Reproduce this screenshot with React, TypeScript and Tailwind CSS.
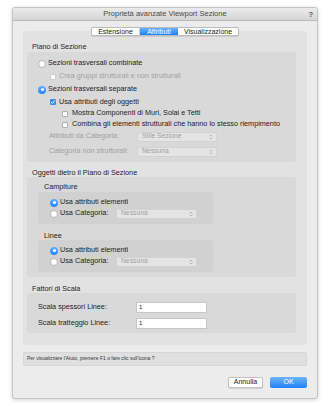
import React from "react";

const font = { fontFamily: '"Liberation Sans", Arial, sans-serif' };

function Radio({ on, disabled }: { on?: boolean; disabled?: boolean }) {
  if (on) {
    return (
      <span className="flex h-[8px] w-[8px] shrink-0 items-center justify-center rounded-full bg-gradient-to-b from-[#5fb0fb] to-[#1f84f7]">
        <span className="h-[3px] w-[3px] rounded-full bg-white" />
      </span>
    );
  }
  return (
    <span
      className={`h-[8px] w-[8px] shrink-0 rounded-full border bg-white ${
        disabled ? "border-[#d0d0d0]" : "border-[#b4b4b4]"
      }`}
    />
  );
}

function Check({ on, disabled }: { on?: boolean; disabled?: boolean }) {
  if (on) {
    return (
      <span className="flex h-[6px] w-[6px] shrink-0 items-center justify-center rounded-[1px] bg-[#2f8ff8]">
        <svg viewBox="0 0 8 8" className="h-[6px] w-[6px]">
          <path d="M1.6 4.2 L3.3 5.9 L6.5 2" fill="none" stroke="white" strokeWidth="1.3" />
        </svg>
      </span>
    );
  }
  return (
    <span
      className={`h-[6px] w-[6px] shrink-0 rounded-[1px] border bg-white ${
        disabled ? "border-[#cdcdcd]" : "border-[#adadad]"
      }`}
    />
  );
}

function Select({ value, width }: { value: string; width: string }) {
  return (
    <div
      className={`flex h-[10px] ${width} items-center justify-between rounded-[2px] border border-[#d2d2d2] bg-[#e4e4e4] pl-[4px] pr-[3px] text-[6.75px] text-[#a0a0a0]`}
    >
      <span>{value}</span>
      <svg viewBox="0 0 6 8" className="h-[6px] w-[4px]">
        <path d="M1 3 L3 1 L5 3 M1 5 L3 7 L5 5" fill="none" stroke="#9a9a9a" strokeWidth="0.9" />
      </svg>
    </div>
  );
}

function ElementChoice() {
  return (
    <div className="ml-[11px] w-[175px] rounded-[3px] bg-[#d1d1d1] px-[12px] py-[5px]">
      <div className="flex h-[11px] items-center gap-[2px]">
        <Radio on />
        <span>Usa attributi elementi</span>
      </div>
      <div className="flex h-[11px] items-center">
        <Radio />
        <span className="ml-[2px] w-[56px]">Usa Categoria:</span>
        <Select value="Nessuna" width="w-[81px]" />
      </div>
    </div>
  );
}

export default function App() {
  return (
    <div className="h-[406px] w-[329px] bg-white pl-[12px] pt-[7px] text-[7.25px] text-[#222]" style={font}>
      <div className="flex h-[392px] w-[306px] flex-col overflow-hidden rounded-[3px] border border-[#c4c4c4] bg-[#ececec] shadow-[0_1px_4px_rgba(0,0,0,0.18)]">
        {/* title bar */}
        <div className="relative flex h-[13px] shrink-0 items-center justify-center border-b border-[#b9b9b9] bg-gradient-to-b from-[#ebebeb] to-[#d5d5d5] text-[7.5px] text-[#4a4a4a]">
          Proprietà avanzate Viewport Sezione
          <span className="absolute right-[4px] top-[1px] text-[7.5px] font-bold text-[#555]">?</span>
        </div>

        <div className="flex flex-1 flex-col px-[10px]">
          {/* tabs */}
          <div className="relative z-10 mt-[6px] flex h-[9px] justify-center">
            <div className="flex h-[9px] overflow-hidden rounded-[2px] border border-[#bdbdbd] bg-white text-[7px] leading-[7px] text-[#222] shadow-[0_0.5px_1px_rgba(0,0,0,0.1)]">
              <span className="flex w-[48px] items-center justify-center border-r border-[#cfcfcf]">Estensione</span>
              <span className="flex w-[38px] items-center justify-center bg-gradient-to-b from-[#69b1fb] to-[#1b7ff8] text-white">
                Attributi
              </span>
              <span className="flex w-[60px] items-center justify-center">Visualizzazione</span>
            </div>
          </div>

          {/* tab content */}
          <div className="-mt-[5px] h-[314px] rounded-[3px] bg-[#e2e2e2] px-[4px] pt-[12px]">
            <div className="h-[8px] pl-[5px] leading-[8px]">Piano di Sezione</div>
            <div className="mt-[1px] w-[269px] rounded-[3px] bg-[#d9d9d9] pb-[4px] pt-[5px]">
              <div className="flex h-[13px] items-center gap-[2px] pl-[11px]">
                <Radio />
                <span>Sezioni trasversali combinate</span>
              </div>
              <div className="flex h-[13px] items-center gap-[3px] pl-[23px] text-[#a2a2a2]">
                <Check disabled />
                <span>Crea gruppi strutturali e non strutturali</span>
              </div>
              <div className="flex h-[13px] items-center gap-[2px] pl-[11px]">
                <Radio on />
                <span>Sezioni trasversali separate</span>
              </div>
              <div className="flex h-[12px] items-center gap-[3px] pl-[23px]">
                <Check on />
                <span>Usa attributi degli oggetti</span>
              </div>
              <div className="flex h-[11px] items-center gap-[4px] pl-[35px]">
                <Check />
                <span>Mostra Componenti di Muri, Solai e Tetti</span>
              </div>
              <div className="flex h-[11px] items-center gap-[4px] pl-[35px]">
                <Check />
                <span>Combina gli elementi strutturali che hanno lo stesso riempimento</span>
              </div>
              <div className="flex h-[13px] items-center pl-[22px] text-[#9f9f9f]">
                <span className="w-[88px]">Attributi da Categoria:</span>
                <Select value="Stile Sezione" width="w-[80px]" />
              </div>
              <div className="mt-[2px] flex h-[13px] items-center pl-[22px] text-[#9f9f9f]">
                <span className="w-[88px]">Categoria non strutturali:</span>
                <Select value="Nessuna" width="w-[80px]" />
              </div>
            </div>

            <div className="h-[15px] pl-[5px] pt-[7px] leading-[8px]">Oggetti dietro il Piano di Sezione</div>
            <div className="w-[269px] rounded-[3px] bg-[#d9d9d9] pb-[5px] pt-[6px]">
              <div className="h-[9px] pl-[17px] leading-[8px]">Campiture</div>
              <ElementChoice />
              <div className="mt-[8px] h-[8px] pl-[17px] leading-[8px]">Linee</div>
              <ElementChoice />
            </div>

            <div className="h-[16px] pl-[5px] pt-[8px] leading-[8px]">Fattori di Scala</div>
            <div className="w-[269px] rounded-[3px] bg-[#d9d9d9] pb-[4px] pt-[8px]">
              <div className="flex h-[12px] items-center pl-[11px]">
                <span className="w-[98px]">Scala spessori Linee:</span>
                <div className="flex h-[11px] w-[71px] items-center border border-[#c6c6c6] bg-white pl-[2px] text-[6px]">1</div>
              </div>
              <div className="mt-[4px] flex h-[12px] items-center pl-[11px]">
                <span className="w-[98px]">Scala tratteggio Linee:</span>
                <div className="flex h-[11px] w-[71px] items-center border border-[#c6c6c6] bg-white pl-[2px] text-[6px]">1</div>
              </div>
            </div>
          </div>

          {/* status */}
          <div className="mt-[7px] h-[14px] rounded-[2px] border border-[#d6d6d6] bg-[#e0e0e0] pl-[3px] pt-[2px] text-[5px] leading-[6px] text-[#333]">
            Per visualizzare l'Aiuto, premere F1 o fare clic sull'icona ?
          </div>

          {/* buttons */}
          <div className="mt-[11px] flex justify-end gap-[7px]">
            <div className="flex h-[11px] w-[35px] items-center justify-center rounded-[2px] border border-[#c2c2c2] bg-white text-[7px] shadow-[0_0.5px_1px_rgba(0,0,0,0.12)]">
              Annulla
            </div>
            <div className="flex h-[11px] w-[37px] items-center justify-center rounded-[2px] bg-gradient-to-b from-[#6ab4fb] to-[#1c80f8] text-[7px] text-white">
              OK
            </div>
          </div>
        </div>
      </div>
    </div>
  );
}
